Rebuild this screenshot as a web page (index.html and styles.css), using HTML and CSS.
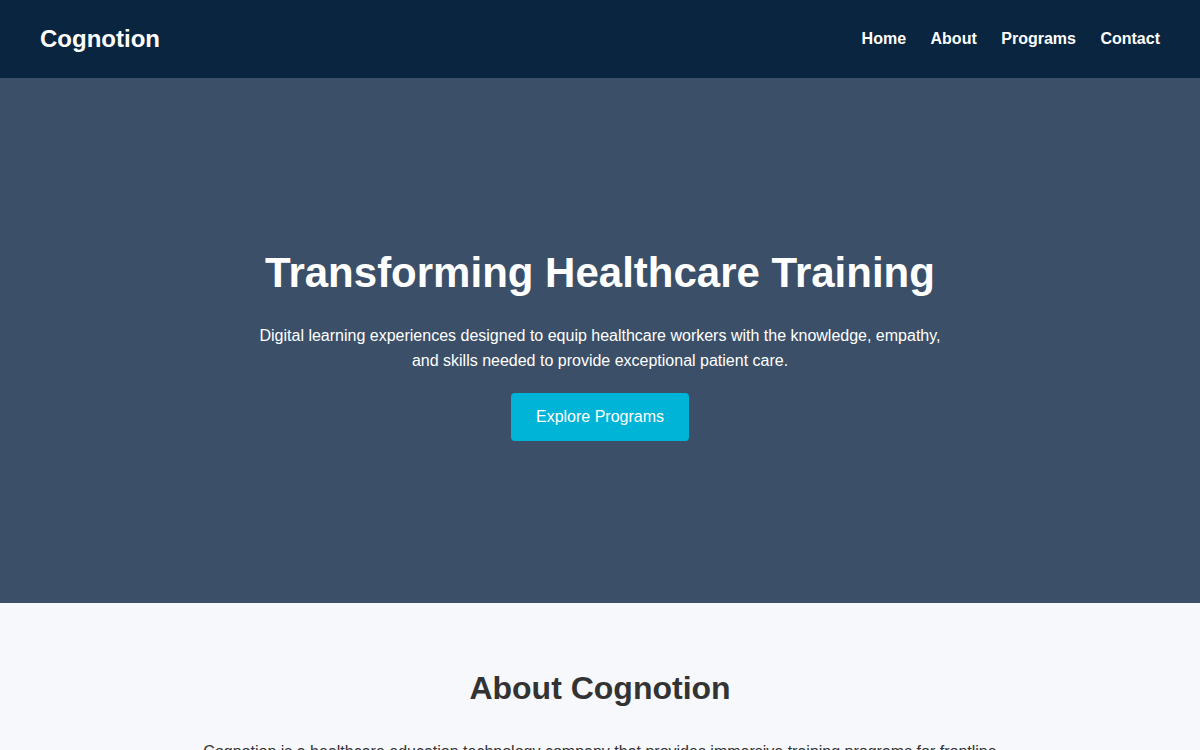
FILE: index.html
```html
<!DOCTYPE html>
<html lang="en">
<head>
<meta charset="utf-8">
<title>Cognotion</title>
<link rel="stylesheet" href="styles.css">
</head>
<body>
<header class="site-header">
  <div class="logo">Cognotion</div>
  <nav class="nav">
    <a href="#">Home</a>
    <a href="#">About</a>
    <a href="#">Programs</a>
    <a href="#">Contact</a>
  </nav>
</header>
<section class="hero">
  <div class="hero-inner">
    <h1>Transforming Healthcare Training</h1>
    <p>Digital learning experiences designed to equip healthcare workers with the knowledge, empathy, and skills needed to provide exceptional patient care.</p>
    <a class="btn" href="#">Explore Programs</a>
  </div>
</section>
<section class="about">
  <h2>About Cognotion</h2>
  <p>Cognotion is a healthcare education technology company that provides immersive training programs for frontline healthcare workers, combining storytelling, simulation and evidence-based curricula.</p>
</section>
</body>
</html>
```
FILE: styles.css
```css
* { box-sizing: border-box; }
body {
  margin: 0;
  font-family: "Liberation Sans", Arial, sans-serif;
  color: #333;
  background: #f7f8fb;
}
.site-header {
  display: flex;
  justify-content: space-between;
  align-items: center;
  height: 78px;
  padding: 0 40px;
  background: #0a2540;
  color: #fff;
}
.logo {
  font-size: 24px;
  font-weight: bold;
}
.nav {
  display: flex;
  gap: 24.5px;
}
.nav a {
  color: #fff;
  text-decoration: none;
  font-weight: bold;
  font-size: 16px;
}
.hero {
  height: 525px;
  padding-top: 9px;
  background: #3b5068;
  color: #fff;
  display: flex;
  align-items: center;
  justify-content: center;
  text-align: center;
}
.hero-inner {
  max-width: 900px;
  display: flex;
  flex-direction: column;
  align-items: center;
}
.hero h1 {
  margin: 0 0 26px;
  font-size: 42px;
}
.hero p {
  max-width: 700px;
  margin: 0 0 20px;
  font-size: 16px;
  line-height: 25px;
}
.btn {
  display: inline-block;
  background: #00b4d8;
  color: #fff;
  text-decoration: none;
  font-size: 16px;
  padding: 15px 25px;
  border-radius: 4px;
}
.about {
  padding: 67px 20px 64px;
  text-align: center;
}
.about h2 {
  margin: 0 0 32px;
  font-size: 32px;
}
.about p {
  max-width: 800px;
  margin: 0 auto;
  font-size: 16px;
  line-height: 1.6;
}
```
